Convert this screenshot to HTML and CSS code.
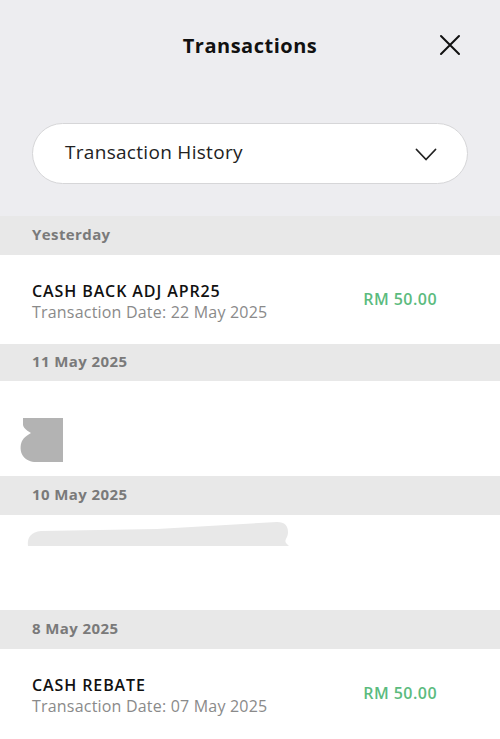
FILE: index.html
```html
<!DOCTYPE html>
<html lang="en">
<head>
    <meta charset="UTF-8">
    <meta name="viewport" content="width=device-width, initial-scale=1.0">
    <title>Transactions</title>
    <link rel="stylesheet" href="styles.css">
</head>
<body>
    <div class="top">
        <header class="header">
            <h1 class="title">Transactions</h1>
            <button class="close" type="button" aria-label="Close">
                <svg width="22" height="22" viewBox="0 0 22 22">
                    <path d="M2 2 L20 20 M20 2 L2 20" stroke="#111" stroke-width="2" fill="none" stroke-linecap="round"/>
                </svg>
            </button>
        </header>
        <div class="filter">
            <span class="filter-label">Transaction History</span>
            <svg class="chevron" width="22" height="14" viewBox="0 0 22 14">
                <path d="M1.5 1.5 L11 11.5 L20.5 1.5" stroke="#222" stroke-width="1.8" fill="none" stroke-linecap="round" stroke-linejoin="round"/>
            </svg>
        </div>
    </div>

    <div class="list">
        <div class="day">Yesterday</div>
        <div class="item">
            <div class="info">
                <div class="name">CASH BACK ADJ APR25</div>
                <div class="date">Transaction Date: 22 May 2025</div>
            </div>
            <div class="amount">RM 50.00</div>
        </div>

        <div class="day day-short">11 May 2025</div>
        <div class="item item-tall">
            <svg class="blot" width="43" height="44" viewBox="0 0 43 44">
                <path d="M3 0 L43 0 L43 44 L16 44 C11 44 6 42 3 38 C0 34 0 27 2 23 C4 19 8 17 11 15 C8 13 4 11 3 7 Z" fill="#b3b3b3"/>
            </svg>
        </div>

        <div class="day">10 May 2025</div>
        <div class="item item-tall">
            <svg class="smudge" width="262" height="24" viewBox="0 0 262 24">
                <path d="M1 24 C0 17 3 10 14 9 L130 7 L250 0 C258 0 261 4 261 10 C261 16 257 18 259 21 L262 24 Z" fill="#e8e8e8"/>
            </svg>
        </div>

        <div class="day">8 May 2025</div>
        <div class="item">
            <div class="info">
                <div class="name">CASH REBATE</div>
                <div class="date">Transaction Date: 07 May 2025</div>
            </div>
            <div class="amount">RM 50.00</div>
        </div>
    </div>
</body>
</html>
```

FILE: styles.css
```css
body {
    margin: 0;
    font-family: "Open Sans", "Liberation Sans", sans-serif;
    background-color: #fff;
    color: #1a1a1a;
}
.top {
    background-color: #ededf0;
    padding-bottom: 32px;
}
.header {
    height: 90px;
    display: flex;
    align-items: center;
    justify-content: center;
    position: relative;
}
.title {
    margin: 0;
    font-size: 20px;
    font-weight: 700;
    color: #111;
    letter-spacing: 0.5px;
}
.close {
    position: absolute;
    right: 39px;
    top: 34px;
    padding: 0;
    border: none;
    background: none;
    line-height: 0;
}
.filter {
    margin: 33px 32px 0;
    height: 59px;
    border: 1px solid #d6d6d8;
    border-radius: 31px;
    background-color: #fff;
    display: flex;
    align-items: center;
    justify-content: space-between;
    padding: 0 30px 0 32px;
}
.filter-label {
    font-size: 19px;
    letter-spacing: 0.3px;
    color: #222;
    margin-bottom: 4px;
}
.chevron {
    margin-top: 2px;
}
.day {
    height: 39px;
    background-color: #e8e8e8;
    padding-left: 32px;
    padding-bottom: 4px;
    box-sizing: border-box;
    display: flex;
    align-items: center;
    font-size: 15px;
    font-weight: 700;
    letter-spacing: 0.4px;
    color: #7a7a7a;
}
.day-short {
    height: 37px;
}
.item {
    height: 89px;
    padding: 0 63px 0 32px;
    display: flex;
    align-items: center;
    justify-content: space-between;
    position: relative;
}
.item-tall {
    height: 95px;
}
.info {
    margin-top: 5px;
}
.name {
    font-size: 16px;
    font-weight: 600;
    letter-spacing: 0.9px;
    color: #111;
    line-height: 21px;
}
.date {
    font-size: 16px;
    letter-spacing: 0.2px;
    color: #8a8a8a;
    line-height: 21px;
}
.amount {
    font-size: 16px;
    font-weight: 600;
    letter-spacing: 0.45px;
    color: #5bbb7e;
    margin-bottom: 2px;
}
.blot {
    position: absolute;
    left: 20px;
    top: 37px;
}
.smudge {
    position: absolute;
    left: 27px;
    top: 7px;
}
```
